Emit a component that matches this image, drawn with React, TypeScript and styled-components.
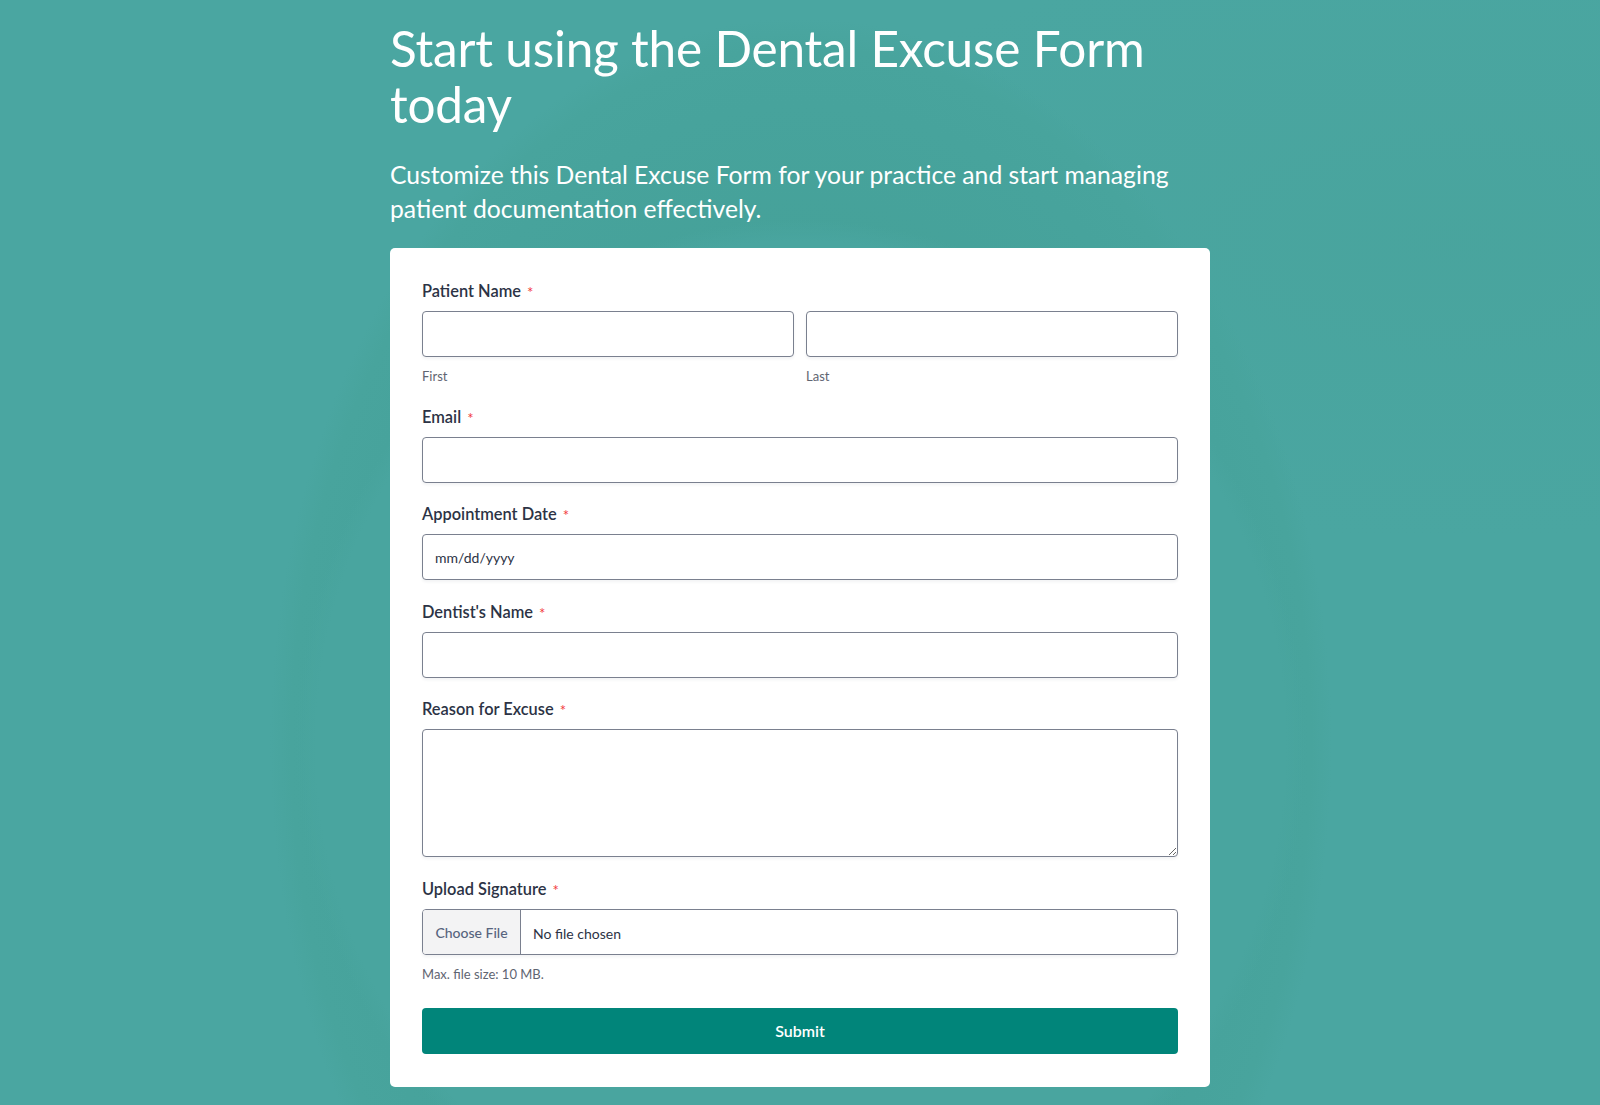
import React from "react";
import styled, { createGlobalStyle } from "styled-components";

const GlobalStyle = createGlobalStyle`
  html, body {
    margin: 0;
    padding: 0;
  }
  body {
    min-height: 1105px;
    font-family: Lato, "Noto Sans", "Liberation Sans", sans-serif;
    background:
      radial-gradient(ellipse 505px 525px at 801px 745px, #49a59f 96%, rgba(73,165,159,0) 100%),
      radial-gradient(ellipse 531px 727px at 801px 745px, #44a097 0%, #44a097 50%, #47a39c 88%, #48a49d 96%, rgba(72,164,157,0) 100%),
      radial-gradient(ellipse 700px 300px at 1450px 240px, rgba(70,160,150,0.3) 0%, rgba(70,160,150,0) 100%),
      #4aa6a1;
    background-repeat: no-repeat;
  }
  * { box-sizing: border-box; }
`;

const Page = styled.main`
  width: 820px;
  margin: 0 auto;
  padding: 20px 0 18px;
  display: flex;
  flex-direction: column;
`;

const Title = styled.h1`
  margin: 0;
  font-family: Lato, "Noto Sans", sans-serif;
  font-weight: 400;
  font-size: 49.5px;
  line-height: 56px;
  color: #ffffff;
  letter-spacing: -0.2px;
`;

const Subtitle = styled.p`
  margin: 26px 0 22px;
  font-family: Lato, "Noto Sans", sans-serif;
  font-weight: 400;
  font-size: 24.7px;
  line-height: 34px;
  color: #ffffff;
  max-width: 800px;
`;

const Card = styled.form`
  background: #ffffff;
  border-radius: 5px;
  padding: 32px 32px 33px;
  display: flex;
  flex-direction: column;
  gap: 20.5px;
`;

const Field = styled.div`
  display: flex;
  flex-direction: column;
`;

const Label = styled.label`
  font-size: 16.4px;
  line-height: 21px;
  font-weight: 600;
  color: #2c3345;
  margin-bottom: 10px;
  display: flex;
  align-items: center;
`;

const Req = styled.span`
  color: #f23a3c;
  font-size: 15px;
  font-weight: 400;
  margin-left: 6px;
  line-height: 1;
  transform: translateY(2px);
`;

const Row = styled.div`
  display: grid;
  grid-template-columns: 1fr 1fr;
  column-gap: 12px;
`;

const Col = styled.div`
  display: flex;
  flex-direction: column;
`;

const TextInput = styled.input`
  width: 100%;
  height: 46px;
  border: 1px solid #7a808f;
  border-radius: 4px;
  padding: 0 12px;
  font-family: Lato, "Noto Sans", sans-serif;
  font-size: 14px;
  color: #2c3345;
  background: #fff;
  box-shadow: 0 2px 3px rgba(40, 50, 70, 0.06);
  outline: none;
  &::placeholder {
    color: #2c3345;
    opacity: 1;
  }
`;

const TextArea = styled.textarea`
  width: 100%;
  height: 128px;
  border: 1px solid #7a808f;
  border-radius: 4px;
  padding: 10px 12px;
  font-family: Lato, "Noto Sans", sans-serif;
  font-size: 14px;
  color: #2c3345;
  background: #fff;
  box-shadow: 0 2px 3px rgba(40, 50, 70, 0.06);
  outline: none;
  resize: vertical;
  display: block;
`;

const SubLabel = styled.span`
  margin-top: 10px;
  font-size: 13px;
  line-height: 18px;
  color: #5f6572;
`;

const FileBox = styled.label`
  height: 46px;
  border: 1px solid #7a808f;
  border-radius: 4px;
  display: flex;
  align-items: stretch;
  overflow: hidden;
  box-shadow: 0 2px 3px rgba(40, 50, 70, 0.06);
  cursor: pointer;
  input {
    display: none;
  }
`;

const FileButton = styled.span`
  width: 98px;
  background: #f3f3f4;
  border-right: 1px solid #7a808f;
  display: flex;
  align-items: center;
  justify-content: center;
  padding-top: 2px;
  font-size: 14px;
  color: #57647e;
  font-weight: 500;
`;

const FileName = styled.span`
  display: flex;
  align-items: center;
  padding: 3px 0 0 12px;
  font-size: 14px;
  color: #2c3345;
`;

const SubmitButton = styled.button`
  margin-top: 4.5px;
  height: 46px;
  width: 100%;
  border: none;
  border-radius: 4px;
  background: #01857a;
  color: #ffffff;
  font-family: Lato, "Noto Sans", sans-serif;
  font-size: 16px;
  font-weight: 600;
  cursor: pointer;
`;

const RequiredLabel: React.FC<{ text: string; htmlFor?: string }> = ({ text, htmlFor }) => (
  <Label htmlFor={htmlFor}>
    {text}
    <Req>*</Req>
  </Label>
);

export default function App() {
  return (
    <>
      <GlobalStyle />
      <Page>
        <Title>Start using the Dental Excuse Form today</Title>
        <Subtitle>
          Customize this Dental Excuse Form for your practice and start managing patient documentation
          effectively.
        </Subtitle>
        <Card onSubmit={(e) => e.preventDefault()}>
          <Field>
            <RequiredLabel text="Patient Name" htmlFor="first" />
            <Row>
              <Col>
                <TextInput id="first" type="text" />
                <SubLabel>First</SubLabel>
              </Col>
              <Col>
                <TextInput id="last" type="text" />
                <SubLabel>Last</SubLabel>
              </Col>
            </Row>
          </Field>
          <Field>
            <RequiredLabel text="Email" htmlFor="email" />
            <TextInput id="email" type="email" />
          </Field>
          <Field>
            <RequiredLabel text="Appointment Date" htmlFor="date" />
            <TextInput id="date" type="text" placeholder="mm/dd/yyyy" />
          </Field>
          <Field>
            <RequiredLabel text="Dentist's Name" htmlFor="dentist" />
            <TextInput id="dentist" type="text" />
          </Field>
          <Field>
            <RequiredLabel text="Reason for Excuse" htmlFor="reason" />
            <TextArea id="reason" />
          </Field>
          <Field>
            <RequiredLabel text="Upload Signature" />
            <FileBox>
              <input type="file" />
              <FileButton>Choose File</FileButton>
              <FileName>No file chosen</FileName>
            </FileBox>
            <SubLabel>Max. file size: 10 MB.</SubLabel>
          </Field>
          <SubmitButton type="submit">Submit</SubmitButton>
        </Card>
      </Page>
    </>
  );
}
